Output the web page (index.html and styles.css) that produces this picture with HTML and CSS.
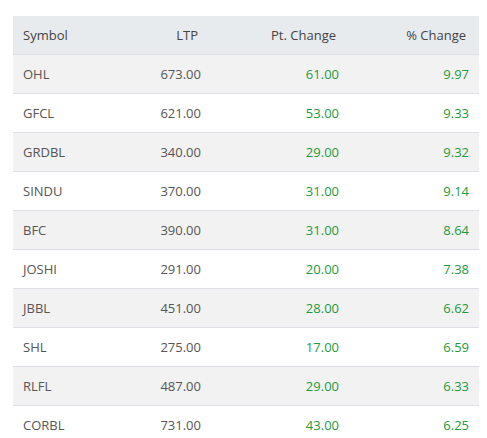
FILE: index.html
```html
<!DOCTYPE html>
<html lang="en">
<head>
	<meta charset="UTF-8">
	<title>Top Gainers</title>
	<link rel="stylesheet" href="styles.css">
</head>
<body>
	<div class="wrap">
		<table class="gainers">
			<colgroup>
				<col class="c-sym">
				<col class="c-ltp">
				<col class="c-pt">
				<col class="c-pc">
			</colgroup>
			<thead>
				<tr>
					<th class="sym">Symbol</th>
					<th>LTP</th>
					<th>Pt. Change</th>
					<th>% Change</th>
				</tr>
			</thead>
			<tbody>
				<tr><td>OHL</td><td class="num">673.00</td><td class="num up">61.00</td><td class="num up">9.97</td></tr>
				<tr><td>GFCL</td><td class="num">621.00</td><td class="num up">53.00</td><td class="num up">9.33</td></tr>
				<tr><td>GRDBL</td><td class="num">340.00</td><td class="num up">29.00</td><td class="num up">9.32</td></tr>
				<tr><td>SINDU</td><td class="num">370.00</td><td class="num up">31.00</td><td class="num up">9.14</td></tr>
				<tr><td>BFC</td><td class="num">390.00</td><td class="num up">31.00</td><td class="num up">8.64</td></tr>
				<tr><td>JOSHI</td><td class="num">291.00</td><td class="num up">20.00</td><td class="num up">7.38</td></tr>
				<tr><td>JBBL</td><td class="num">451.00</td><td class="num up">28.00</td><td class="num up">6.62</td></tr>
				<tr><td>SHL</td><td class="num">275.00</td><td class="num up">17.00</td><td class="num up">6.59</td></tr>
				<tr><td>RLFL</td><td class="num">487.00</td><td class="num up">29.00</td><td class="num up">6.33</td></tr>
				<tr><td>CORBL</td><td class="num">731.00</td><td class="num up">43.00</td><td class="num up">6.25</td></tr>
			</tbody>
		</table>
	</div>
</body>
</html>
```

FILE: styles.css
```css
body{
	margin: 0;
	background: #fff;
	font-family: "Open Sans", "Noto Sans", sans-serif;
	font-size: 13px;
	color: #555;
}
.wrap{
	padding: 16px 8px 0 13px;
}
.gainers{
	width: 466px;
	table-layout: fixed;
	border-collapse: collapse;
}
.c-sym{ width: 100px; }
.c-ltp{ width: 98px; }
.c-pt{ width: 138px; }
.c-pc{ width: 130px; }
.gainers th,
.gainers td{
	height: 38px;
	padding: 0 10px;
	border-bottom: 1px solid #dde1e6;
	font-weight: normal;
	text-align: right;
	white-space: nowrap;
}
.gainers th{
	background: #e8ebee;
	color: #444;
	padding-right: 13px;
}
.gainers .sym,
.gainers td:first-child{
	text-align: left;
}
.gainers tbody tr:nth-child(odd){
	background: #f2f2f2;
}
.gainers .up{
	color: #1d9a3c;
}
```
